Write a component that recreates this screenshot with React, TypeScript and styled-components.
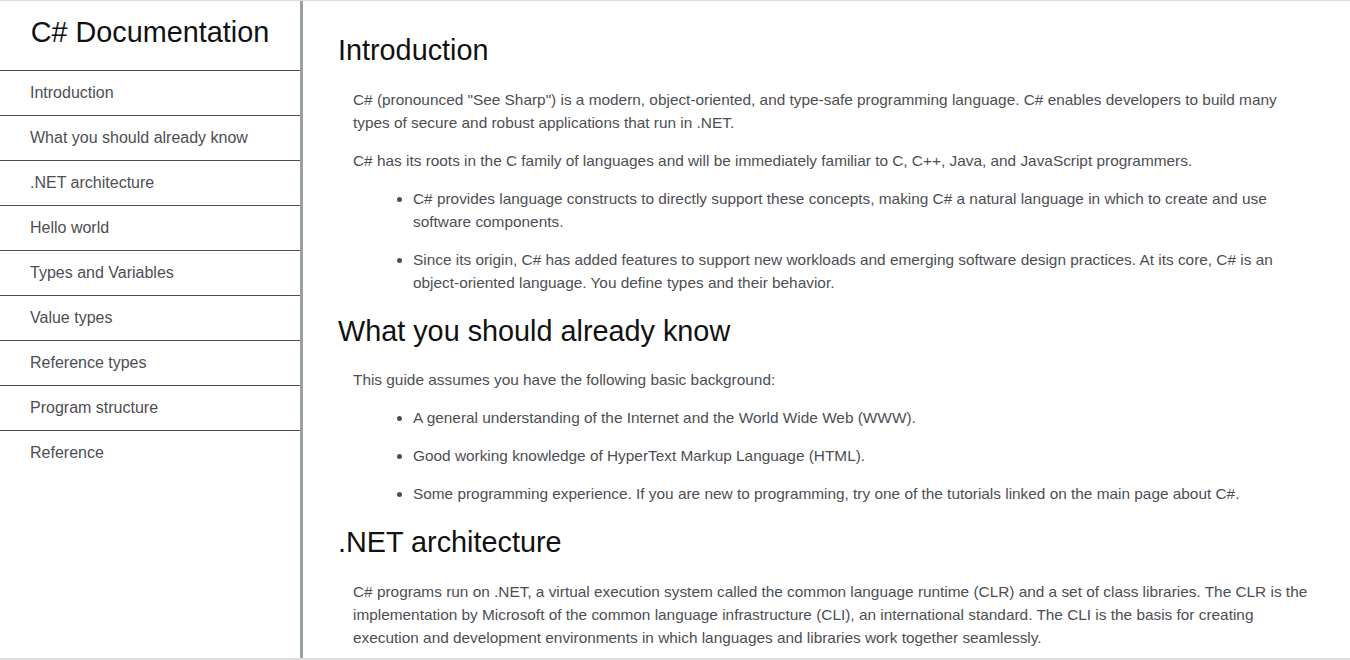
import React from "react";
import styled, { createGlobalStyle } from "styled-components";

const GlobalStyle = createGlobalStyle`
  html, body { margin: 0; padding: 0; background: #fff; }
  body { font-family: "Liberation Sans", Arial, sans-serif; }
  * { box-sizing: border-box; }
`;

const Page = styled.div`
  display: flex;
  height: 660px;
  border-top: 1px solid #dedede;
  border-bottom: 2px solid #dcdcdc;
  overflow: hidden;
`;

const Sidebar = styled.nav`
  flex: 0 0 303px;
  border-right: 3px solid #9aa39f;
  display: flex;
  flex-direction: column;
`;

const SideHeader = styled.header`
  height: 70px;
  display: flex;
  align-items: center;
  justify-content: center;
  font-size: 28.8px;
  color: #111;
  border-bottom: 1px solid #4d4e53;
  padding-bottom: 6px;
`;

const NavList = styled.ul`
  list-style: none;
  margin: 0;
  padding: 0;
`;

const NavItem = styled.li<{ $last?: boolean }>`
  height: 45px;
  display: flex;
  align-items: center;
  padding-left: 30px;
  font-size: 16px;
  color: #4d4e53;
  border-bottom: ${(p) => (p.$last ? "none" : "1px solid #4d4e53")};
  padding-bottom: 1px;
`;

const Main = styled.main`
  flex: 1;
  padding: 27px 40px 0 35px;
  overflow: hidden;
`;

const Section = styled.section``;

const Heading = styled.h2`
  margin: 0 0 14.5px;
  font-size: 28.8px;
  font-weight: 400;
  color: #111;
  line-height: 45px;
`;

const Para = styled.p`
  margin: 0 0 15px 15px;
  font-size: 15.38px;
  line-height: 23px;
  color: #4d4e53;
`;

const List = styled.ul`
  margin: 0 0 0 15px;
  padding-left: 60px;
  font-size: 15.38px;
  line-height: 23px;
  color: #4d4e53;
`;

const Item = styled.li`
  margin-bottom: 15px;
`;

const navItems = [
  "Introduction",
  "What you should already know",
  ".NET architecture",
  "Hello world",
  "Types and Variables",
  "Value types",
  "Reference types",
  "Program structure",
  "Reference",
];

export default function App() {
  return (
    <>
      <GlobalStyle />
      <Page>
        <Sidebar>
          <SideHeader>C# Documentation</SideHeader>
          <NavList>
            {navItems.map((n, i) => (
              <NavItem key={n} $last={i === navItems.length - 1}>
                {n}
              </NavItem>
            ))}
          </NavList>
        </Sidebar>
        <Main>
          <Section>
            <Heading>Introduction</Heading>
            <Para>
              C# (pronounced "See Sharp") is a modern, object-oriented, and type-safe programming language. C# enables developers to build many types of secure and robust applications that run in .NET.
            </Para>
            <Para>
              C# has its roots in the C family of languages and will be immediately familiar to C, C++, Java, and JavaScript programmers.
            </Para>
            <List>
              <Item>
                C# provides language constructs to directly support these concepts, making C# a natural language in which to create and use software components.
              </Item>
              <Item>
                Since its origin, C# has added features to support new workloads and emerging software design practices. At its core, C# is an object-oriented language. You define types and their behavior.
              </Item>
            </List>
          </Section>
          <Section>
            <Heading>What you should already know</Heading>
            <Para>This guide assumes you have the following basic background:</Para>
            <List>
              <Item>A general understanding of the Internet and the World Wide Web (WWW).</Item>
              <Item>Good working knowledge of HyperText Markup Language (HTML).</Item>
              <Item>Some programming experience. If you are new to programming, try one of the tutorials linked on the main page about C#.</Item>
            </List>
          </Section>
          <Section>
            <Heading>.NET architecture</Heading>
            <Para>
              C# programs run on .NET, a virtual execution system called the common language runtime (CLR) and a set of class libraries. The CLR is the implementation by Microsoft of the common language infrastructure (CLI), an international standard. The CLI is the basis for creating execution and development environments in which languages and libraries work together seamlessly.
            </Para>
          </Section>
        </Main>
      </Page>
    </>
  );
}
